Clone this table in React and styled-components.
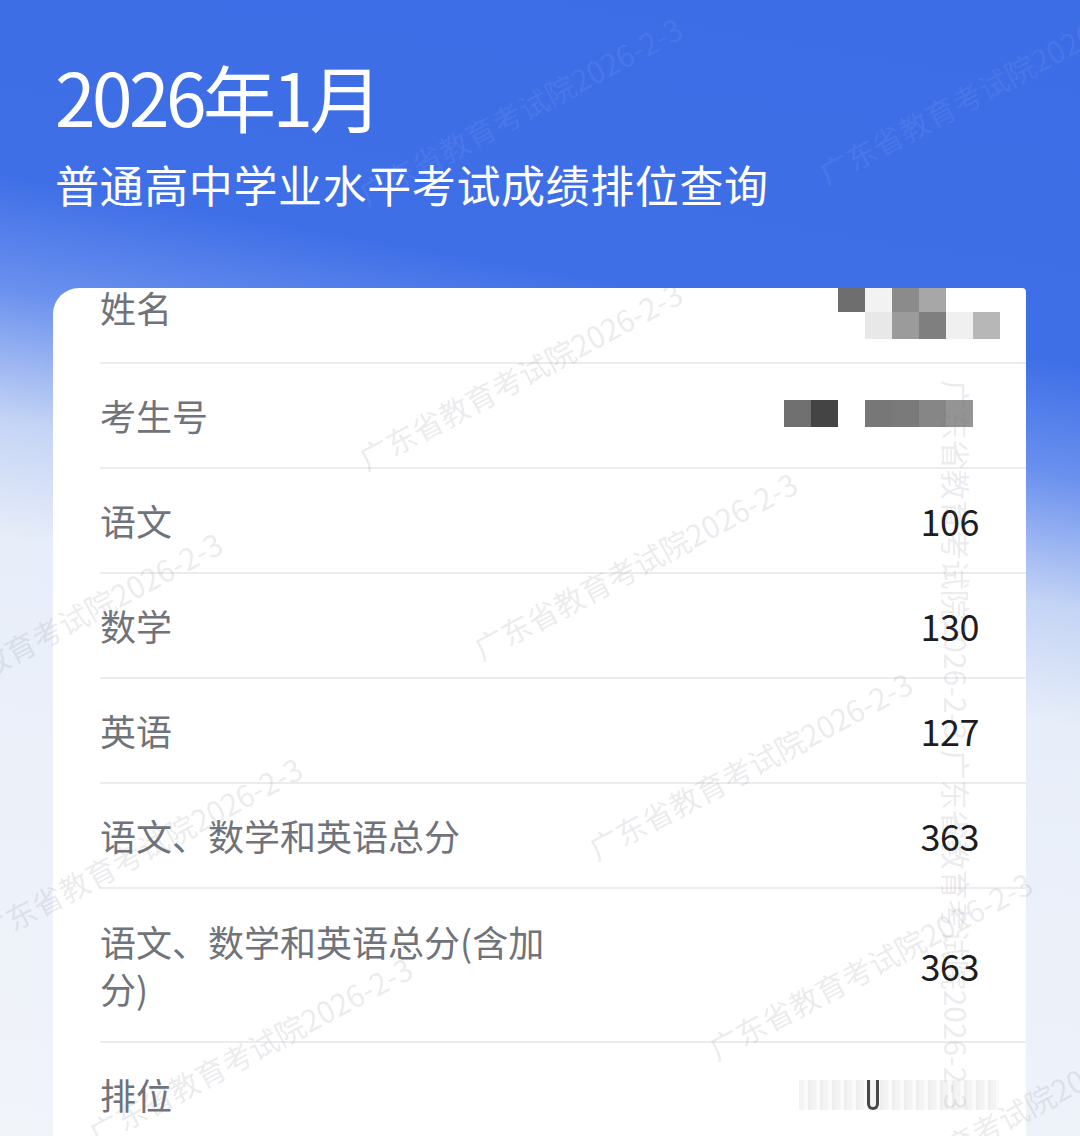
import React from "react";
import styled, { createGlobalStyle } from "styled-components";

const Global = createGlobalStyle`
  html, body { margin: 0; padding: 0; }
  body { font-family: "Noto Sans CJK SC", "Noto Sans", sans-serif; }
`;

const Page = styled.div`
  position: relative;
  width: 1080px;
  height: 1136px;
  overflow: hidden;
  background: linear-gradient(190deg, #3d6de6 0px, #3f6fe7 360px, #6a90ee 470px, #c4d4f5 600px, #e8eef9 720px, #f1f4f9 100%);
`;

const Header = styled.header`
  padding: 57px 55px 0;
  color: #ffffff;
`;

const Title = styled.h1`
  margin: 0;
  font-size: 73px;
  line-height: 76px;
  font-weight: 400;
  letter-spacing: -3.5px;
`;

const Subtitle = styled.h2`
  margin: 29px 0 0;
  font-size: 44px;
  line-height: 44px;
  font-weight: 400;
  letter-spacing: 0.6px;
`;

const Card = styled.section`
  margin: 82px 54px 0 53px;
  height: 900px;
  background: #ffffff;
  border-radius: 26px 4px 0 0;
  overflow: hidden;
`;

const List = styled.div`
  margin-top: -36px;
  padding-left: 47px;
`;

const Row = styled.div`
  display: flex;
  align-items: center;
  justify-content: space-between;
  min-height: 47px;
  padding: ${(p) => (p.$wrap ? "29px 0" : "28px 0")};
  border-bottom: 2px solid #ececee;
`;

const Label = styled.div`
  max-width: 460px;
  font-size: 36px;
  line-height: 47px;
  color: #70737a;
`;

const Value = styled.div`
  padding-right: 47px;
  font-size: 36px;
  line-height: 47px;
  color: #1d1d1f;
  letter-spacing: -0.5px;
  display: flex;
  align-items: center;
`;

const Mosaic = styled.div`
  display: grid;
  grid-template-columns: repeat(${(p) => p.$cols}, 27px);
  grid-auto-rows: 27px;
  margin-right: ${(p) => p.$mr}px;
  transform: translateY(${(p) => p.$dy}px);
`;

const Cell = styled.div`
  background: ${(p) => p.$c};
`;

const Blur = styled.div`
  position: relative;
  width: 200px;
  height: 30px;
  margin-right: -20px;
  background: repeating-linear-gradient(90deg, #f3f3f3 0 5px, #fafafa 5px 9px, #eeeeee 9px 12px);
`;

const BlurMark = styled.div`
  position: absolute;
  left: 68px;
  top: 0;
  width: 12px;
  height: 30px;
  border: 3px solid #2a2a2a;
  border-top: none;
  border-radius: 0 0 7px 7px;
  box-sizing: border-box;
  opacity: 0.85;
`;

const Watermarks = styled.div`
  position: absolute;
  inset: 0;
  pointer-events: none;
`;

const Mark = styled.span`
  position: absolute;
  white-space: nowrap;
  font-size: 30px;
  line-height: 30px;
  color: ${(p) => (p.$light ? "rgba(255,255,255,0.07)" : "rgba(110,110,120,0.15)")};
  transform: translate(-50%, -50%) rotate(${(p) => p.$rot}deg);
`;

const nameCells = [
  "#6e6e6e", "#f2f2f2", "#8b8b8b", "#a7a7a7", "transparent", "transparent",
  "transparent", "#e8e8e8", "#9b9b9b", "#7f7f7f", "#f0f0f0", "#b7b7b7",
];
const idCells = ["#707070", "#444444", "transparent", "#777777", "#7a7a7a", "#868686", "#949494"];

const rows = [
  { label: "语文", value: "106" },
  { label: "数学", value: "130" },
  { label: "英语", value: "127" },
  { label: "语文、数学和英语总分", value: "363" },
  { label: "语文、数学和英语总分(含加分)", value: "363", wrap: true },
];

const marks = [
  { x: 520, y: 375, r: -28 },
  { x: 635, y: 565, r: -28 },
  { x: 750, y: 765, r: -28 },
  { x: 870, y: 965, r: -28 },
  { x: 60, y: 625, r: -28 },
  { x: 140, y: 850, r: -28 },
  { x: 250, y: 1050, r: -28 },
  { x: 957, y: 560, r: 90 },
  { x: 957, y: 930, r: 90 },
  { x: 520, y: 110, r: -28, light: true },
  { x: 980, y: 90, r: -28, light: true },
  { x: 1000, y: 1120, r: -28 },
];

export default function App() {
  return (
    <Page>
      <Global />
      <Header>
        <Title>2026年1月</Title>
        <Subtitle>普通高中学业水平考试成绩排位查询</Subtitle>
      </Header>
      <Card>
        <List>
          <Row>
            <Label>姓名</Label>
            <Value>
              <Mosaic $cols={6} $mr={-21} $dy={5}>
                {nameCells.map((c, i) => (
                  <Cell key={i} $c={c} />
                ))}
              </Mosaic>
            </Value>
          </Row>
          <Row>
            <Label>考生号</Label>
            <Value>
              <Mosaic $cols={7} $mr={6} $dy={-2}>
                {idCells.map((c, i) => (
                  <Cell key={i} $c={c} />
                ))}
              </Mosaic>
            </Value>
          </Row>
          {rows.map((r) => (
            <Row key={r.label} $wrap={r.wrap}>
              <Label>{r.label}</Label>
              <Value>{r.value}</Value>
            </Row>
          ))}
          <Row>
            <Label>排位</Label>
            <Value>
              <Blur>
                <BlurMark />
              </Blur>
            </Value>
          </Row>
        </List>
      </Card>
      <Watermarks>
        {marks.map((m, i) => (
          <Mark key={i} $rot={m.r} $light={m.light} style={{ left: m.x, top: m.y }}>
            广东省教育考试院2026-2-3
          </Mark>
        ))}
      </Watermarks>
    </Page>
  );
}
